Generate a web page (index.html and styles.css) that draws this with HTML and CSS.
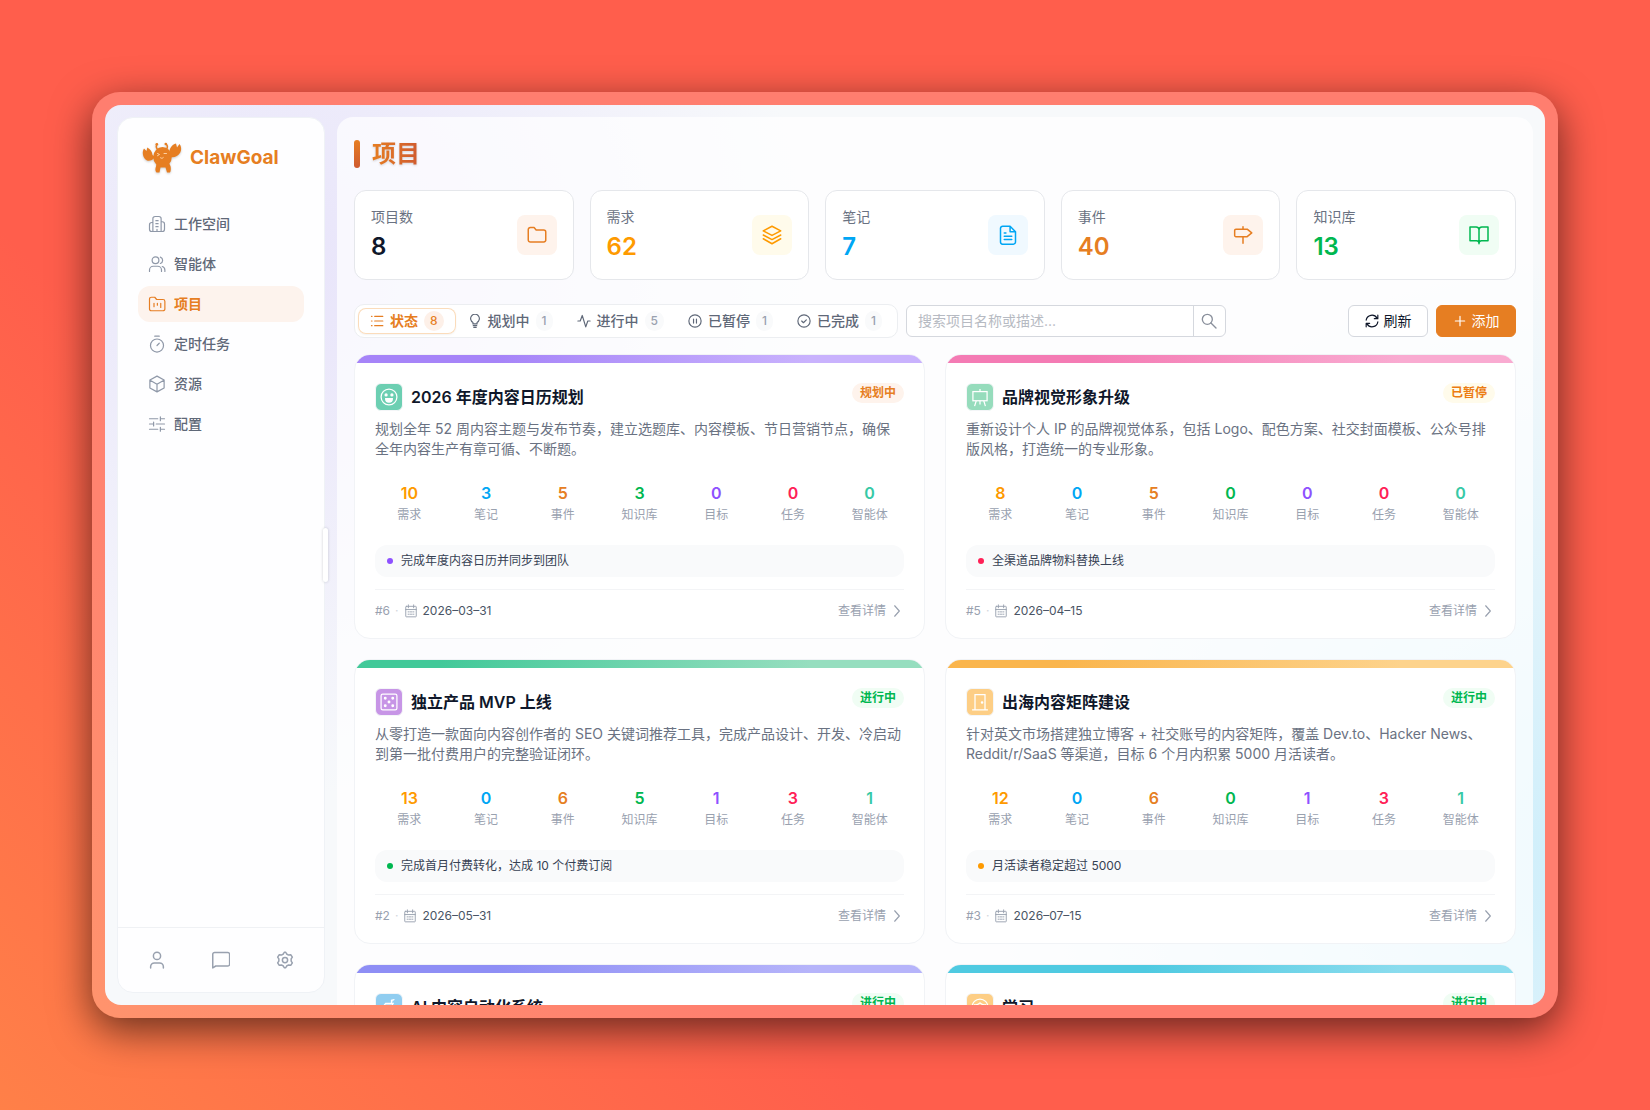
FILE: index.html
```html
<!DOCTYPE html>
<html lang="zh-CN">
<head>
    <meta charset="UTF-8">
    <meta name="viewport" content="width=device-width, initial-scale=1.0">
    <title>ClawGoal</title>
    <link rel="stylesheet" href="styles.css">
</head>
<body>
    <!-- shared icons -->
    <svg class="sprite" aria-hidden="true">
        <symbol id="i-calendar" viewBox="0 0 24 24"><rect x="3" y="4" width="18" height="18" rx="1"/><path d="M3 9.500h18M7.500 1.500v5M16.500 1.500v5M7 13.500h2M11 13.500h2M15 13.500h2M7 17.500h2M11 17.500h2M15 17.500h2"/></symbol>
        <symbol id="i-right" viewBox="0 0 24 24"><path d="M8 3l8 9-8 9"/></symbol>
    </svg>

    <div class="frame">
        <div class="app">
            <aside class="sidebar">
                <a class="logo" href="#">
                    <svg class="logo-mark" viewBox="0 0 40 32" aria-hidden="true">
                        <path d="M15.500 7.500C14 5.500 14 3.500 15.200 2.200M24.500 7.500c1.200-2 1.200-4-.5-5.300" fill="none" stroke="currentColor" stroke-width="1.500" stroke-linecap="round"/>
                        <circle cx="14.800" cy="2.300" r="1.300"/><circle cx="23.800" cy="2" r="1.300"/>
                        <ellipse cx="20.500" cy="15" rx="9.300" ry="10"/>
                        <path d="M14.500 21h12.500l1.500 3c.5 2 .5 5-.5 6.500h-3l-1.500-5h-5l-1 5h-3c-1.500-1.500-1.300-4-.5-6z"/>
                        <path d="M13 15c-3 4-7 5-9.500 2.500C.5 14.500 0 9.500 2 6.500L4.500 9l.8-3.500c3.200 1.500 5 4.500 5.200 7.500z"/>
                        <path d="M27 14.500c4 2 9 0 11.300-4 1.500-3 1-6.500-.8-8.500L35 5.500 34 1.500c-4 1-6.800 5-6.500 9z"/>
                        <path d="M15.500 11.500l2 1-2 1.200M22 11.500h2.500M18.500 15.800c1 .8 2 .6 2.800-.2" fill="none" stroke="#ffd9b0" stroke-width=".9" stroke-linecap="round"/>
                    </svg>
                    <span class="logo-text">ClawGoal</span>
                </a>
                <nav class="nav">
                    <a class="nav-item" href="#">
                        <svg class="icon" viewBox="0 0 24 24"><path d="M6.500 22V5a3 3 0 0 1 3-3h5a3 3 0 0 1 3 3v17M17.500 9H19a3 3 0 0 1 3 3v7a3 3 0 0 1-3 3H5a3 3 0 0 1-3-3v-6a3 3 0 0 1 3-3h1.500M10.500 7.500h3M10.500 11.500h3M10.500 15.500h3M12 22v-3"/></svg>
                        工作空间
                    </a>
                    <a class="nav-item" href="#">
                        <svg class="icon" viewBox="0 0 24 24"><circle cx="10" cy="7" r="4.500"/><path d="M2 22v-2a5 5 0 0 1 5-5h6a5 5 0 0 1 5 5v2M16.500 2.800a4.500 4.500 0 0 1 0 8.500M22.500 22v-2a5 5 0 0 0-3.500-4.600"/></svg>
                        智能体
                    </a>
                    <a class="nav-item active" href="#">
                        <svg class="icon" viewBox="0 0 24 24"><path d="M2 5.500A2.500 2.500 0 0 1 4.500 3H9l2.500 3H20a2.500 2.500 0 0 1 2.500 2.500v10A2.500 2.500 0 0 1 20 21H4.500A2.500 2.500 0 0 1 2 18.500zM8 11v4.500M12.500 11v2.500M17 11v5.500"/></svg>
                        项目
                    </a>
                    <a class="nav-item" href="#">
                        <svg class="icon" viewBox="0 0 24 24"><circle cx="12" cy="14" r="8.700"/><path d="M9 1.500h6M12 14l3-3"/></svg>
                        定时任务
                    </a>
                    <a class="nav-item" href="#">
                        <svg class="icon" viewBox="0 0 24 24"><path d="M12 1.500l9.500 5.200v10.600L12 22.500l-9.500-5.200V6.700zM2.800 7L12 12.200 21.200 7M12 12.200v10"/></svg>
                        资源
                    </a>
                    <a class="nav-item" href="#">
                        <svg class="icon" viewBox="0 0 24 24"><path d="M2 5h11M17 5h5M16.500 2.500v5M2 12h5M11 12h11M7.500 9.500v5M2 19h11M17 19h5M16.500 16.500v5"/></svg>
                        配置
                    </a>
                </nav>
                <div class="sidebar-footer">
                    <button class="icon-btn" type="button" aria-label="用户">
                        <svg class="icon" viewBox="0 0 24 24"><circle cx="12" cy="6.500" r="4.800"/><path d="M3.500 22.500V21a5 5 0 0 1 5-5h7a5 5 0 0 1 5 5v1.500"/></svg>
                    </button>
                    <button class="icon-btn" type="button" aria-label="消息">
                        <svg class="icon" viewBox="0 0 24 24"><path d="M1 22.500V4.500A2.500 2.500 0 0 1 3.500 2h17.500a2.500 2.500 0 0 1 2.500 2.500v13a2.500 2.500 0 0 1-2.500 2.500H5z"/></svg>
                    </button>
                    <button class="icon-btn" type="button" aria-label="设置">
                        <svg class="icon" viewBox="0 0 24 24"><path d="M9.800 4l1.200-2.300h2L14.200 4l2.600 1.400 2.800-.5 2.200 3.300-1.600 2.400v2.800l1.600 2.400-2.200 3.300-2.800-.5-2.600 1.400-1.200 2.300h-2L9.800 20l-2.600-1.400-2.800.5-2.200-3.300 1.600-2.400v-2.800L2.200 8.200l2.200-3.300 2.800.5z"/><circle cx="12" cy="12" r="3.500"/></svg>
                    </button>
                </div>
                <span class="resize-handle"></span>
            </aside>

            <main class="main">
                <h1 class="page-title"><span>项目</span></h1>

                <section class="stats">
                    <div class="stat">
                        <div>
                            <p class="stat-label">项目数</p>
                            <p class="stat-value">8</p>
                        </div>
                        <span class="stat-icon bg-orange orange"><svg class="icon" viewBox="0 0 24 24"><path d="M1.500 5.500A2.500 2.500 0 0 1 4 3h4.500L11 6h9a2.500 2.500 0 0 1 2.500 2.500v9A2.500 2.500 0 0 1 20 20.500H4A2.500 2.500 0 0 1 1.500 18z"/></svg></span>
                    </div>
                    <div class="stat">
                        <div>
                            <p class="stat-label">需求</p>
                            <p class="stat-value amber">62</p>
                        </div>
                        <span class="stat-icon bg-amber amber"><svg class="icon" viewBox="0 0 24 24"><path d="M12 1.500L1.500 7 12 12.500 22.500 7zM1.500 12L12 17.500 22.500 12M1.500 16.500L12 22.500l10.500-6"/></svg></span>
                    </div>
                    <div class="stat">
                        <div>
                            <p class="stat-label">笔记</p>
                            <p class="stat-value blue">7</p>
                        </div>
                        <span class="stat-icon bg-blue blue"><svg class="icon" viewBox="0 0 24 24"><path d="M14.500 1.500H5.500A2.500 2.500 0 0 0 3 4v16.500A2.500 2.500 0 0 0 5.500 23h13a2.500 2.500 0 0 0 2.500-2.500V8zM14.500 1.500V8H21M7.500 9.500h2M7.500 13.500h9M7.500 17.500h9"/></svg></span>
                    </div>
                    <div class="stat">
                        <div>
                            <p class="stat-label">事件</p>
                            <p class="stat-value orange">40</p>
                        </div>
                        <span class="stat-icon bg-orange orange"><svg class="icon" viewBox="0 0 24 24"><path d="M12 2v3M12 14v8M3.500 5H17l5.500 4.500L17 14H3.500a1.500 1.500 0 0 1-1.500-1.500v-6A1.500 1.500 0 0 1 3.500 5z"/></svg></span>
                    </div>
                    <div class="stat">
                        <div>
                            <p class="stat-label">知识库</p>
                            <p class="stat-value green">13</p>
                        </div>
                        <span class="stat-icon bg-green green"><svg class="icon" viewBox="0 0 24 24"><path d="M12 5.500v17M12 5.500a3.500 3.500 0 0 0-3.500-3H1.200v16.500H9a3 3 0 0 1 3 3 3 3 0 0 1 3-3h7.800V2.500h-7.300a3.500 3.500 0 0 0-3.500 3z"/></svg></span>
                    </div>
                </section>

                <div class="toolbar">
                    <div class="tabs">
                        <button class="tab active" type="button">
                            <svg class="icon" viewBox="0 0 24 24"><path d="M8 4h14M8 12h14M8 20h14M2.500 4h1M2.500 12h1M2.500 20h1"/></svg>
                            状态 <span class="count">8</span>
                        </button>
                        <button class="tab" type="button">
                            <svg class="icon" viewBox="0 0 24 24"><path d="M8.500 17v-2.500a7.500 7.500 0 1 1 7 0V17zM9 20h6M10 23h4"/></svg>
                            规划中 <span class="count">1</span>
                        </button>
                        <button class="tab" type="button">
                            <svg class="icon" viewBox="0 0 24 24"><path d="M1.500 12h4L9 2.500 15 22l3.500-10h4"/></svg>
                            进行中 <span class="count">5</span>
                        </button>
                        <button class="tab" type="button">
                            <svg class="icon" viewBox="0 0 24 24"><circle cx="12" cy="12" r="10.500"/><path d="M9.500 8.500v7M14.500 8.500v7"/></svg>
                            已暂停 <span class="count">1</span>
                        </button>
                        <button class="tab" type="button">
                            <svg class="icon" viewBox="0 0 24 24"><circle cx="12" cy="12" r="10.500"/><path d="M8 12l3 3 5-5"/></svg>
                            已完成 <span class="count">1</span>
                        </button>
                    </div>
                    <form class="search">
                        <input type="text" placeholder="搜索项目名称或描述..." aria-label="搜索项目名称或描述">
                        <button type="button" aria-label="搜索">
                            <svg class="icon" viewBox="0 0 24 24"><circle cx="9.500" cy="9.500" r="7.500"/><path d="M15 15l7.500 7.500"/></svg>
                        </button>
                    </form>
                    <div class="actions">
                        <button class="btn" type="button">
                            <svg class="icon" viewBox="0 0 24 24"><path d="M2 10.500A10 10 0 0 1 20.500 7M22 2v6h-6M22 13.500A10 10 0 0 1 3.500 17M2 22v-6h6"/></svg>
                            刷新
                        </button>
                        <button class="btn primary" type="button">
                            <svg class="icon" viewBox="0 0 24 24"><path d="M12 4v16M4 12h16"/></svg>
                            添加
                        </button>
                    </div>
                </div>

                <section class="cards">
                    <article class="card bar-purple">
                        <header class="card-head">
                            <span class="card-icon tile-teal"><svg viewBox="0 0 24 24"><circle cx="12" cy="12" r="9.500"/><path d="M8 14h8a4 4 0 0 1-8 0z" fill="currentColor"/><circle cx="8.500" cy="9.500" r="1.200" fill="currentColor"/><circle cx="15.500" cy="9.500" r="1.200" fill="currentColor"/></svg></span>
                            <h2>2026 年度内容日历规划</h2>
                            <span class="badge planning">规划中</span>
                        </header>
                        <p class="desc">规划全年 52 周内容主题与发布节奏，建立选题库、内容模板、节日营销节点，确保全年内容生产有章可循、不断题。</p>
                        <dl class="counts">
                            <div><dd class="amber">10</dd><dt>需求</dt></div>
                            <div><dd class="blue">3</dd><dt>笔记</dt></div>
                            <div><dd class="orange">5</dd><dt>事件</dt></div>
                            <div><dd class="green">3</dd><dt>知识库</dt></div>
                            <div><dd class="purple">0</dd><dt>目标</dt></div>
                            <div><dd class="red">0</dd><dt>任务</dt></div>
                            <div><dd class="teal">0</dd><dt>智能体</dt></div>
                        </dl>
                        <p class="goal"><i class="dot purple"></i>完成年度内容日历并同步到团队</p>
                        <footer class="card-foot">
                            <span>#6</span><span class="sep">·</span>
                            <svg class="icon"><use href="#i-calendar"/></svg>
                            <time>2026–03–31</time>
                            <a class="more" href="#">查看详情 <svg class="icon"><use href="#i-right"/></svg></a>
                        </footer>
                    </article>

                    <article class="card bar-pink">
                        <header class="card-head">
                            <span class="card-icon tile-green"><svg viewBox="0 0 24 24"><rect x="3.500" y="5.500" width="17" height="11"/><path d="M12 2.500v3M7.500 16.500L5.500 23M16.500 16.500l2 6.500M12 16.500V21"/></svg></span>
                            <h2>品牌视觉形象升级</h2>
                            <span class="badge paused">已暂停</span>
                        </header>
                        <p class="desc">重新设计个人 IP 的品牌视觉体系，包括 Logo、配色方案、社交封面模板、公众号排版风格，打造统一的专业形象。</p>
                        <dl class="counts">
                            <div><dd class="amber">8</dd><dt>需求</dt></div>
                            <div><dd class="blue">0</dd><dt>笔记</dt></div>
                            <div><dd class="orange">5</dd><dt>事件</dt></div>
                            <div><dd class="green">0</dd><dt>知识库</dt></div>
                            <div><dd class="purple">0</dd><dt>目标</dt></div>
                            <div><dd class="red">0</dd><dt>任务</dt></div>
                            <div><dd class="teal">0</dd><dt>智能体</dt></div>
                        </dl>
                        <p class="goal"><i class="dot red"></i>全渠道品牌物料替换上线</p>
                        <footer class="card-foot">
                            <span>#5</span><span class="sep">·</span>
                            <svg class="icon"><use href="#i-calendar"/></svg>
                            <time>2026–04–15</time>
                            <a class="more" href="#">查看详情 <svg class="icon"><use href="#i-right"/></svg></a>
                        </footer>
                    </article>

                    <article class="card bar-green">
                        <header class="card-head">
                            <span class="card-icon tile-violet"><svg viewBox="0 0 24 24"><rect x="2.500" y="2.500" width="19" height="19" rx="2"/><g fill="currentColor"><circle cx="7.500" cy="7.500" r="1"/><circle cx="16.500" cy="7.500" r="1"/><circle cx="12" cy="12" r="1"/><circle cx="7.500" cy="16.500" r="1"/><circle cx="16.500" cy="16.500" r="1"/></g></svg></span>
                            <h2>独立产品 MVP 上线</h2>
                            <span class="badge running">进行中</span>
                        </header>
                        <p class="desc">从零打造一款面向内容创作者的 SEO 关键词推荐工具，完成产品设计、开发、冷启动到第一批付费用户的完整验证闭环。</p>
                        <dl class="counts">
                            <div><dd class="amber">13</dd><dt>需求</dt></div>
                            <div><dd class="blue">0</dd><dt>笔记</dt></div>
                            <div><dd class="orange">6</dd><dt>事件</dt></div>
                            <div><dd class="green">5</dd><dt>知识库</dt></div>
                            <div><dd class="purple">1</dd><dt>目标</dt></div>
                            <div><dd class="red">3</dd><dt>任务</dt></div>
                            <div><dd class="teal">1</dd><dt>智能体</dt></div>
                        </dl>
                        <p class="goal"><i class="dot green"></i>完成首月付费转化，达成 10 个付费订阅</p>
                        <footer class="card-foot">
                            <span>#2</span><span class="sep">·</span>
                            <svg class="icon"><use href="#i-calendar"/></svg>
                            <time>2026–05–31</time>
                            <a class="more" href="#">查看详情 <svg class="icon"><use href="#i-right"/></svg></a>
                        </footer>
                    </article>

                    <article class="card bar-amber">
                        <header class="card-head">
                            <span class="card-icon tile-amber"><svg viewBox="0 0 24 24"><path d="M6 21V3h12v18M2.500 21.500h19"/><circle cx="14.500" cy="12.500" r=".8" fill="currentColor"/></svg></span>
                            <h2>出海内容矩阵建设</h2>
                            <span class="badge running">进行中</span>
                        </header>
                        <p class="desc">针对英文市场搭建独立博客 + 社交账号的内容矩阵，覆盖 Dev.to、Hacker News、Reddit/r/SaaS 等渠道，目标 6 个月内积累 5000 月活读者。</p>
                        <dl class="counts">
                            <div><dd class="amber">12</dd><dt>需求</dt></div>
                            <div><dd class="blue">0</dd><dt>笔记</dt></div>
                            <div><dd class="orange">6</dd><dt>事件</dt></div>
                            <div><dd class="green">0</dd><dt>知识库</dt></div>
                            <div><dd class="purple">1</dd><dt>目标</dt></div>
                            <div><dd class="red">3</dd><dt>任务</dt></div>
                            <div><dd class="teal">1</dd><dt>智能体</dt></div>
                        </dl>
                        <p class="goal"><i class="dot amber"></i>月活读者稳定超过 5000</p>
                        <footer class="card-foot">
                            <span>#3</span><span class="sep">·</span>
                            <svg class="icon"><use href="#i-calendar"/></svg>
                            <time>2026–07–15</time>
                            <a class="more" href="#">查看详情 <svg class="icon"><use href="#i-right"/></svg></a>
                        </footer>
                    </article>

                    <article class="card bar-indigo">
                        <header class="card-head">
                            <span class="card-icon tile-sky"><svg viewBox="0 0 24 24"><path d="M18.500 3l-3.500 1v3.500M8 7.500h9l-2 4h4v9H5v-9z" fill="currentColor" fill-opacity=".5"/></svg></span>
                            <h2>AI 内容自动化系统</h2>
                            <span class="badge running">进行中</span>
                        </header>
                    </article>

                    <article class="card bar-cyan">
                        <header class="card-head">
                            <span class="card-icon tile-amber"><svg viewBox="0 0 24 24"><circle cx="12" cy="12" r="9.500"/><path d="M4.500 9c3 1 5.500 0 7.500-2 2 2 4.500 3 7.500 2"/></svg></span>
                            <h2>学习</h2>
                            <span class="badge running">进行中</span>
                        </header>
                    </article>
                </section>
            </main>
        </div>
    </div>
</body>
</html>
```
FILE: styles.css
```css
* {
    box-sizing: border-box;
}

body {
    margin: 0;
    height: 100vh;
    padding: 92px;
    font-family: Inter, "Noto Sans CJK SC", sans-serif;
    font-size: 14px;
    line-height: 20px;
    color: #0f172a;
    background: linear-gradient(45deg, #ff8048 0%, #ff5e4c 32%, #ff5e4c 100%);
}

h1, h2, p, dl, dd {
    margin: 0;
}

a {
    color: inherit;
    text-decoration: none;
}

button, input {
    font: inherit;
    color: inherit;
}

button {
    cursor: pointer;
}

.sprite {
    display: none;
}

.icon {
    width: 14px;
    height: 14px;
    flex: none;
    fill: none;
    stroke: currentColor;
    stroke-width: 2;
    stroke-linecap: round;
    stroke-linejoin: round;
}

/* colours */
.orange { color: #e67e22; }
.amber { color: #fe9a00; }
.blue { color: #00a6f4; }
.green { color: #00b750; }
.purple { color: #8e51ff; }
.red { color: #ff2056; }
.teal { color: #36c9a6; }

.bg-orange { background: #fef3ec; }
.bg-amber { background: #fffbeb; }
.bg-blue { background: #f0f9ff; }
.bg-green { background: #f0fdf4; }

/* window */
.frame {
    height: 100%;
    padding: 13px;
    border-radius: 28px;
    background: rgba(255, 255, 255, 0.2);
    box-shadow: 0 12px 40px rgba(0, 0, 0, 0.6);
}

.app {
    height: 100%;
    display: flex;
    gap: 12px;
    padding: 12px 12px 0;
    border-radius: 16px;
    overflow: hidden;
    background:
        radial-gradient(circle at 12% 18%, #e8e4fa 0%, rgba(232, 228, 250, 0) 36%),
        radial-gradient(circle at 104% 84%, #cdeefb 0%, rgba(205, 238, 251, 0) 36%),
        #f7f9fb;
}

/* sidebar */
.sidebar {
    position: relative;
    flex: none;
    width: 208px;
    margin-bottom: 12px;
    display: flex;
    flex-direction: column;
    border: 1px solid #eff2f6;
    border-radius: 16px;
    background: #fefeff;
}

.logo {
    display: flex;
    align-items: center;
    gap: 8px;
    height: 40px;
    margin: 20px 24px 28px;
    color: #e67e22;
}

.logo-mark {
    width: 40px;
    height: 32px;
    fill: currentColor;
    filter: drop-shadow(0 1px 1px rgba(0, 0, 0, 0.2));
}

.logo-text {
    font-size: 19px;
    font-weight: 700;
}

.nav {
    flex: 1;
    display: flex;
    flex-direction: column;
    gap: 4px;
    padding: 0 20px;
}

.nav-item {
    display: flex;
    align-items: center;
    gap: 8px;
    height: 36px;
    padding: 0 10px;
    border-radius: 12px;
    font-weight: 500;
    color: #5f6878;
}

.nav-item .icon {
    width: 18px;
    height: 18px;
    stroke-width: 1.6;
    color: #8f98a8;
}

.nav-item.active {
    background: #fdf3ed;
    font-weight: 700;
    color: #e67e22;
}

.nav-item.active .icon {
    color: #e67e22;
}

.sidebar-footer {
    display: flex;
    justify-content: space-between;
    padding: 23px 30px;
    border-top: 1px solid #eff1f4;
}

.icon-btn {
    display: flex;
    padding: 0;
    border: none;
    background: none;
    color: #99a1af;
}

.icon-btn .icon {
    width: 18px;
    height: 18px;
}

.resize-handle {
    position: absolute;
    top: 50%;
    right: -4px;
    width: 5px;
    height: 54px;
    transform: translateY(-50%);
    border-radius: 3px;
    background: #fff;
    box-shadow: 0 0 3px rgba(15, 23, 42, 0.2);
}

/* main panel */
.main {
    flex: 1;
    min-width: 0;
    overflow: hidden;
    padding: 17px;
    border-radius: 16px 16px 0 0;
    background: rgba(255, 255, 255, 0.7);
}

.page-title {
    display: flex;
    align-items: center;
    gap: 12px;
    height: 40px;
    margin-bottom: 16px;
    font-size: 24px;
    line-height: 32px;
    font-weight: 700;
}

.page-title::before {
    content: "";
    width: 6px;
    height: 28px;
    border-radius: 3px;
    background: linear-gradient(#e67e22, #cf5a30);
}

.page-title span {
    background: linear-gradient(90deg, #e67e22, #cf5a30);
    -webkit-background-clip: text;
    background-clip: text;
    color: transparent;
    filter: drop-shadow(0 1px 1px rgba(0, 0, 0, 0.15));
}

.stats {
    display: grid;
    grid-template-columns: repeat(5, 1fr);
    gap: 16px;
    margin-bottom: 24px;
}

.stat {
    display: flex;
    align-items: center;
    justify-content: space-between;
    height: 90px;
    padding: 0 16px;
    border: 1px solid #e5e7eb;
    border-radius: 12px;
    background: #fff;
}

.stat-label {
    color: #6a7282;
}

.stat-value {
    margin-top: 4px;
    font-size: 24px;
    line-height: 32px;
    font-weight: 600;
}

.stat-icon {
    display: flex;
    align-items: center;
    justify-content: center;
    width: 40px;
    height: 40px;
    border-radius: 8px;
}

.stat-icon .icon {
    width: 20px;
    height: 20px;
    stroke-width: 1.8;
}

/* toolbar */
.toolbar {
    display: flex;
    align-items: center;
    gap: 8px;
    margin-bottom: 16px;
}

.tabs {
    display: flex;
    padding: 3px;
    border: 1px solid #eceef1;
    border-radius: 10px;
    background: #fff;
}

.tab {
    display: flex;
    align-items: center;
    gap: 6px;
    height: 26px;
    padding: 0 12px;
    border: none;
    border-radius: 8px;
    background: none;
    font-weight: 500;
    color: #5f6878;
    white-space: nowrap;
}

.tab.active {
    box-shadow: inset 0 0 0 1px #fbdcbb, 0 1px 2px rgba(0, 0, 0, 0.05);
    font-weight: 700;
    color: #e67e22;
}

.count {
    padding: 0 6px;
    border-radius: 10px;
    background: #f9fafb;
    font-size: 12px;
    font-weight: 500;
    color: #99a1af;
}

.tab.active .count {
    background: #fdf0e8;
    color: #e67e22;
}

.search {
    display: flex;
    width: 320px;
    height: 32px;
    border: 1px solid #d5d8de;
    border-radius: 6px;
    overflow: hidden;
    background: #fff;
}

.search input {
    flex: 1;
    min-width: 0;
    padding: 0 11px;
    border: none;
    outline: none;
    background: none;
}

.search input::placeholder {
    color: #b6bac2;
}

.search button {
    display: flex;
    align-items: center;
    justify-content: center;
    width: 32px;
    padding: 0;
    border: none;
    border-left: 1px solid #d5d8de;
    background: none;
    color: #8a909c;
}

.search .icon {
    width: 16px;
    height: 16px;
}

.actions {
    display: flex;
    gap: 8px;
    margin-left: auto;
}

.btn {
    display: flex;
    align-items: center;
    justify-content: center;
    gap: 5px;
    width: 80px;
    height: 32px;
    padding: 0;
    border: 1px solid #d5d8de;
    border-radius: 6px;
    background: #fff;
    white-space: nowrap;
}

.btn.primary {
    border-color: #e67e22;
    background: #e67e22;
    color: #fff;
}

/* project cards */
.cards {
    display: grid;
    grid-template-columns: repeat(2, 1fr);
    gap: 20px;
}

.card {
    padding: 0 20px 18px;
    border: 1px solid #f1f3f6;
    border-radius: 16px;
    overflow: hidden;
    background: #fff;
}

.card::before {
    content: "";
    display: block;
    height: 8px;
    margin: 0 -20px 20px;
}

.bar-purple::before { background: linear-gradient(90deg, #a684f8 25%, #c9b2fd 80%); }
.bar-pink::before { background: linear-gradient(90deg, #f47bb4 25%, #f9abd1 80%); }
.bar-green::before { background: linear-gradient(90deg, #42c999 15%, #96debf 80%); }
.bar-amber::before { background: linear-gradient(90deg, #fab54c 20%, #fdd38c 80%); }
.bar-indigo::before { background: linear-gradient(90deg, #8e8ef5 25%, #b6b4fa 80%); }
.bar-cyan::before { background: linear-gradient(90deg, #4fcae1 35%, #8adcee 80%); }

.card-head {
    display: flex;
    align-items: center;
    gap: 8px;
    height: 28px;
    margin-bottom: 8px;
}

.card-icon {
    display: flex;
    align-items: center;
    justify-content: center;
    width: 28px;
    height: 28px;
    border: 1px solid #f4f6f8;
    border-radius: 6px;
    color: #fff;
}

.card-icon svg {
    width: 20px;
    height: 20px;
    fill: none;
    stroke: currentColor;
    stroke-width: 1.5;
}

.tile-teal { background: #6ccfb2; }
.tile-green { background: #96dcbc; }
.tile-violet { background: #c795e6; }
.tile-amber { background: #fdce85; }
.tile-sky { background: #90cdf0; }

.card-head h2 {
    flex: 1;
    font-size: 16px;
    line-height: 24px;
    font-weight: 600;
}

.badge {
    align-self: flex-start;
    padding: 0 8px;
    border-radius: 10px;
    font-size: 12px;
    font-weight: 600;
}

.badge.planning {
    background: #fef3ec;
    color: #e67e22;
}

.badge.paused {
    background: #fffbeb;
    color: #ec7c12;
}

.badge.running {
    background: #f0fdf4;
    color: #00b750;
}

.desc {
    padding-right: 1px;
    color: #6a7282;
}

.counts {
    display: grid;
    grid-template-columns: repeat(7, 1fr);
    gap: 8px;
    margin: 14px 0;
    text-align: center;
}

.counts div {
    display: flex;
    flex-direction: column;
    gap: 2px;
    padding: 8px 0;
}

.counts dd {
    font-size: 16px;
    line-height: 24px;
    font-weight: 600;
}

.counts dt {
    font-size: 12px;
    line-height: 16px;
    color: #99a1af;
}

.goal {
    display: flex;
    align-items: center;
    gap: 8px;
    height: 32px;
    margin-bottom: 12px;
    padding: 0 12px;
    border-radius: 12px;
    background: #f9fafb;
    font-size: 12px;
    color: #364153;
}

.dot {
    width: 6px;
    height: 6px;
    border-radius: 50%;
    background: currentColor;
}

.card-foot {
    display: flex;
    align-items: center;
    gap: 5px;
    padding-top: 12px;
    border-top: 1px solid #f3f4f6;
    font-size: 12px;
    line-height: 18px;
    color: #99a1af;
}

.card-foot .icon {
    stroke-width: 1.6;
}

.card-foot .sep {
    color: #d1d5dc;
}

.card-foot time {
    color: #4a5565;
}

.more {
    display: flex;
    align-items: center;
    gap: 4px;
    margin-left: auto;
}

.more .icon {
    stroke-width: 2;
}
```
